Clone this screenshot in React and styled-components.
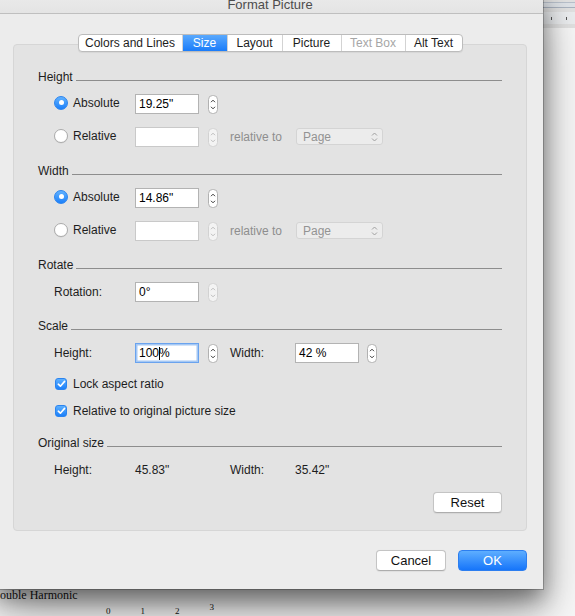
import React from 'react';
import styled, { createGlobalStyle, css } from 'styled-components';

const GlobalStyle = createGlobalStyle`
  html, body { margin: 0; padding: 0; }
  body {
    width: 575px;
    height: 616px;
    overflow: hidden;
    font-family: "Liberation Sans", Arial, sans-serif;
    -webkit-font-smoothing: antialiased;
  }
`;

const Desktop = styled.div`
  position: relative;
  width: 575px;
  height: 616px;
  overflow: hidden;
  background: #f7f7f7;
`;

/* ---------- document behind the dialog ---------- */
const DocumentLayer = styled.div`
  position: absolute;
  inset: 0;
  display: flex;
  flex-direction: column;
  background: #f8f8f8;
`;

const DocToolbar = styled.div`
  flex: none;
  height: 28px;
  display: flex;
  flex-direction: column;
  background: #e2e2e2;
`;

const ToolbarLines = styled.div`
  height: 4px;
  margin-top: 2px;
  border-top: 1px solid #b9c1cc;
  border-bottom: 1px solid #aab3c0;
  background: #dfe3e8;
`;

const Ruler = styled.div`
  margin-top: 4px;
  height: 12px;
  background: #eceef0;
  display: flex;
  justify-content: flex-end;
  align-items: center;
  gap: 14px;
  padding-right: 8px;
`;

const Tick = styled.span`
  width: 1px;
  height: 3px;
  background: #555;
`;

const Page = styled.div`
  flex: 1;
  display: flex;
  flex-direction: column;
  justify-content: flex-end;
  font-family: "Liberation Serif", "Times New Roman", serif;
  color: #111;
`;

const Caption = styled.div`
  font-size: 12px;
  line-height: 14px;
  margin-bottom: 1px;
`;

const NumberRow = styled.div`
  display: flex;
  height: 13px;
  padding-left: 106px;
  align-items: flex-end;
  font-size: 9px;
  line-height: 10px;
`;

const Num = styled.span`
  width: 34.5px;
  position: relative;
  top: ${p => (p.$raised ? -4 : 0)}px;
`;

/* ---------- dialog window ---------- */
const Window = styled.div`
  position: absolute;
  left: -3px;
  top: -9px;
  width: 546px;
  height: 598px;
  box-sizing: border-box;
  display: flex;
  flex-direction: column;
  background: #ececec;
  border-radius: 5px 5px 0 0;
  box-shadow: 0 0 0 1px rgba(0, 0, 0, 0.22), 0 10px 22px rgba(0, 0, 0, 0.42),
    0 22px 50px rgba(0, 0, 0, 0.35);
`;

const TitleBar = styled.div`
  flex: none;
  box-sizing: border-box;
  height: 23px;
  padding-top: 4px;
  display: flex;
  align-items: center;
  justify-content: center;
  font-size: 13px;
  color: #4d4d4d;
  background: linear-gradient(#ececec, #e4e4e4);
  border-bottom: 1px solid #bfbfbf;
`;

const Body = styled.div`
  flex: 1;
  display: flex;
  flex-direction: column;
  padding: 20px 16px 18px;
`;

const TabBar = styled.div`
  align-self: center;
  position: relative;
  z-index: 1;
  display: flex;
  height: 18px;
  box-sizing: border-box;
  margin-bottom: -8px;
  background: #fff;
  border: 1px solid #bcbcbc;
  border-radius: 4px;
  overflow: hidden;
  box-shadow: 0 1px 1px rgba(0, 0, 0, 0.06);
`;

const Tab = styled.div`
  box-sizing: border-box;
  width: ${p => p.$w}px;
  display: flex;
  align-items: center;
  justify-content: center;
  font-size: 12px;
  line-height: 16px;
  color: ${p => (p.$disabled ? '#a6a6a6' : '#1d1d1d')};
  & + & { border-left: 1px solid #d3d3d3; }
  ${p =>
    p.$active &&
    css`
      color: #fff;
      background: linear-gradient(#5aa9fd, #1a7cfa);
      && { border-left-color: #3d8ff5; }
    `}
`;

const Panel = styled.div`
  flex: 1;
  display: flex;
  flex-direction: column;
  padding: 25px 24px 17px;
  background: #e3e3e3;
  border: 1px solid #d6d6d6;
  border-radius: 4px;
`;

const Section = styled.section`
  display: flex;
  flex-direction: column;
  margin-top: ${p => p.$top || 0}px;
`;

const SectionHead = styled.div`
  display: flex;
  align-items: baseline;
  height: 14px;
  font-size: 12px;
  line-height: 14px;
  color: #1d1d1d;
  &::after {
    content: '';
    flex: 1;
    margin-left: 3px;
    border-bottom: 1px solid #8d8d8d;
  }
`;

const Rows = styled.div`
  display: flex;
  flex-direction: column;
  gap: ${p => p.$gap ?? 13}px;
  padding: ${p => p.$top ?? 10}px 0 0 16px;
`;

const Row = styled.div`
  display: flex;
  align-items: center;
  height: 20px;
  font-size: 12px;
  color: #1d1d1d;
`;

const LabelCell = styled.div`
  box-sizing: border-box;
  width: ${p => p.$w || 81}px;
  flex: none;
  display: flex;
  align-items: center;
  gap: 5px;
  padding-bottom: ${p => (p.$lift ? 3 : 0)}px;
  margin-left: ${p => p.$ml || 0}px;
  color: ${p => (p.$muted ? '#8e8e8e' : '#1d1d1d')};
`;

const Radio = styled.span`
  flex: none;
  width: 14px;
  height: 14px;
  box-sizing: border-box;
  border-radius: 50%;
  display: flex;
  align-items: center;
  justify-content: center;
  ${p =>
    p.$on
      ? css`
          background: linear-gradient(#61b2ff, #1c80fa);
          border: 1px solid #2b84ef;
          &::after {
            content: '';
            width: 5px;
            height: 5px;
            border-radius: 50%;
            background: #fff;
          }
        `
      : css`
          background: #fff;
          border: 1px solid #ababab;
          box-shadow: 0 0.5px 0.5px rgba(0, 0, 0, 0.08);
        `}
`;

const Field = styled.div`
  box-sizing: border-box;
  flex: none;
  width: 64px;
  height: 20px;
  display: flex;
  align-items: center;
  padding-left: 3px;
  background: #fff;
  font-size: 12px;
  color: #000;
  border: 1px solid ${p => (p.$focus ? '#6aa3ee' : p.$disabled ? '#c9c9c9' : '#b3b3b3')};
  box-shadow: ${p => (p.$focus ? 'inset 0 0 0 1.5px #a5c8f4' : 'none')};
`;

const Caret = styled.span`
  display: inline-block;
  width: 1px;
  height: 13px;
  margin-right: -1px;
  background: #000;
`;

const StepperBox = styled.svg`
  flex: none;
  margin-left: ${p => p.$ml ?? 9}px;
  display: block;
`;

const Stepper = ({ disabled, ml }) => {
  const stroke = disabled ? '#bdbdbd' : '#3a3a3a';
  return (
    <StepperBox $ml={ml} width="10" height="19" viewBox="0 0 10 19">
      <rect
        x="0.5"
        y="0.5"
        width="9"
        height="18"
        rx="4"
        fill={disabled ? '#f3f3f3' : '#fff'}
        stroke={disabled ? '#d2d2d2' : '#b1b1b1'}
      />
      <path d="M3 7.2 L5 5.2 L7 7.2" fill="none" stroke={stroke} strokeWidth="1" />
      <path d="M3 11.8 L5 13.8 L7 11.8" fill="none" stroke={stroke} strokeWidth="1" />
    </StepperBox>
  );
};

const Popup = styled.div`
  box-sizing: border-box;
  flex: none;
  width: 87px;
  height: 17px;
  margin-top: -1px;
  display: flex;
  align-items: center;
  justify-content: space-between;
  padding: 0 4px 0 6px;
  background: #ececec;
  border: 1px solid #d4d4d4;
  border-radius: 3px;
  color: #939393;
  font-size: 12px;
`;

const Checkbox = styled.span`
  flex: none;
  width: 12px;
  height: 12px;
  margin-left: 1px;
  border-radius: 3px;
  background: linear-gradient(#5db0ff, #1c80fa);
  border: 1px solid #2b84ef;
  box-sizing: border-box;
  display: flex;
  align-items: center;
  justify-content: center;
`;

const CheckLabel = styled.div`
  display: flex;
  align-items: center;
  gap: 6px;
`;

const Value = styled.div`
  width: ${p => p.$w}px;
  flex: none;
`;

const PushButton = styled.button`
  box-sizing: border-box;
  width: ${p => p.$w}px;
  height: 21px;
  padding: 0;
  font-family: inherit;
  font-size: 13px;
  border-radius: 4px;
  ${p =>
    p.$primary
      ? css`
          color: #fff;
          background: linear-gradient(#5eaeff, #1675fa);
          border: 1px solid #2c7ef0;
        `
      : css`
          color: #111;
          background: #fff;
          border: 1px solid #c4c4c4;
          border-bottom-color: #adadad;
          box-shadow: 0 0.5px 1px rgba(0, 0, 0, 0.06);
        `}
`;

const ResetButton = styled(PushButton)`
  align-self: flex-end;
  margin-top: 12px;
`;

const Footer = styled.div`
  flex: none;
  display: flex;
  justify-content: flex-end;
  gap: 12px;
  margin-top: 19px;
`;

const UpDown = () => (
  <svg width="7" height="10" viewBox="0 0 7 10">
    <path d="M1 3.5 L3.5 1 L6 3.5" fill="none" stroke="#a0a0a0" strokeWidth="1" />
    <path d="M1 6.5 L3.5 9 L6 6.5" fill="none" stroke="#a0a0a0" strokeWidth="1" />
  </svg>
);

const Check = () => (
  <svg width="9" height="8" viewBox="0 0 9 8">
    <path d="M1.3 4.2 L3.4 6.2 L7.6 1.4" fill="none" stroke="#fff" strokeWidth="1.6" strokeLinecap="round" strokeLinejoin="round" />
  </svg>
);

const tabs = [
  { label: 'Colors and Lines', w: 103 },
  { label: 'Size', w: 45, active: true },
  { label: 'Layout', w: 55 },
  { label: 'Picture', w: 59 },
  { label: 'Text Box', w: 64, disabled: true },
  { label: 'Alt Text', w: 57 },
];

const SizeBlock = ({ title, value, top }) => (
  <Section $top={top}>
    <SectionHead>{title}</SectionHead>
    <Rows>
      <Row>
        <LabelCell $lift>
          <Radio $on />
          Absolute
        </LabelCell>
        <Field>{value}</Field>
        <Stepper />
      </Row>
      <Row>
        <LabelCell $lift>
          <Radio />
          Relative
        </LabelCell>
        <Field $disabled />
        <Stepper disabled />
        <LabelCell $w={66} $ml={12} $muted>
          relative to
        </LabelCell>
        <Popup>
          Page
          <UpDown />
        </Popup>
      </Row>
    </Rows>
  </Section>
);

export default function App() {
  return (
    <>
      <GlobalStyle />
      <Desktop>
        <DocumentLayer>
          <DocToolbar>
            <ToolbarLines />
            <Ruler>
              <Tick />
              <Tick />
            </Ruler>
          </DocToolbar>
          <Page>
            <Caption>ouble Harmonic</Caption>
            <NumberRow>
              <Num>0</Num>
              <Num>1</Num>
              <Num>2</Num>
              <Num $raised>3</Num>
            </NumberRow>
          </Page>
        </DocumentLayer>

        <Window>
          <TitleBar>Format Picture</TitleBar>
          <Body>
            <TabBar>
              {tabs.map(t => (
                <Tab key={t.label} $w={t.w} $active={t.active} $disabled={t.disabled}>
                  {t.label}
                </Tab>
              ))}
            </TabBar>
            <Panel>
              <SizeBlock title="Height" value={'19.25"'} />
              <SizeBlock title="Width" value={'14.86"'} top={17} />

              <Section $top={17}>
                <SectionHead>Rotate</SectionHead>
                <Rows>
                  <Row>
                    <LabelCell>Rotation:</LabelCell>
                    <Field>0°</Field>
                    <Stepper disabled />
                  </Row>
                </Rows>
              </Section>

              <Section $top={17}>
                <SectionHead>Scale</SectionHead>
                <Rows $gap={11}>
                  <Row>
                    <LabelCell>Height:</LabelCell>
                    <Field $focus>
                      100<Caret /> %
                    </Field>
                    <Stepper />
                    <LabelCell $w={65} $ml={12}>
                      Width:
                    </LabelCell>
                    <Field>42 %</Field>
                    <Stepper ml={8} />
                  </Row>
                  <Row>
                    <CheckLabel>
                      <Checkbox>
                        <Check />
                      </Checkbox>
                      Lock aspect ratio
                    </CheckLabel>
                  </Row>
                </Rows>
                <Rows $top={7}>
                  <Row>
                    <CheckLabel>
                      <Checkbox>
                        <Check />
                      </Checkbox>
                      Relative to original picture size
                    </CheckLabel>
                  </Row>
                </Rows>
              </Section>

              <Section $top={15}>
                <SectionHead>Original size</SectionHead>
                <Rows>
                  <Row>
                    <LabelCell>Height:</LabelCell>
                    <Value $w={95}>45.83"</Value>
                    <Value $w={65}>Width:</Value>
                    <Value $w={60}>35.42"</Value>
                  </Row>
                </Rows>
              </Section>

              <ResetButton $w={69}>Reset</ResetButton>
            </Panel>
            <Footer>
              <PushButton $w={70}>Cancel</PushButton>
              <PushButton $w={69} $primary>
                OK
              </PushButton>
            </Footer>
          </Body>
        </Window>
      </Desktop>
    </>
  );
}
